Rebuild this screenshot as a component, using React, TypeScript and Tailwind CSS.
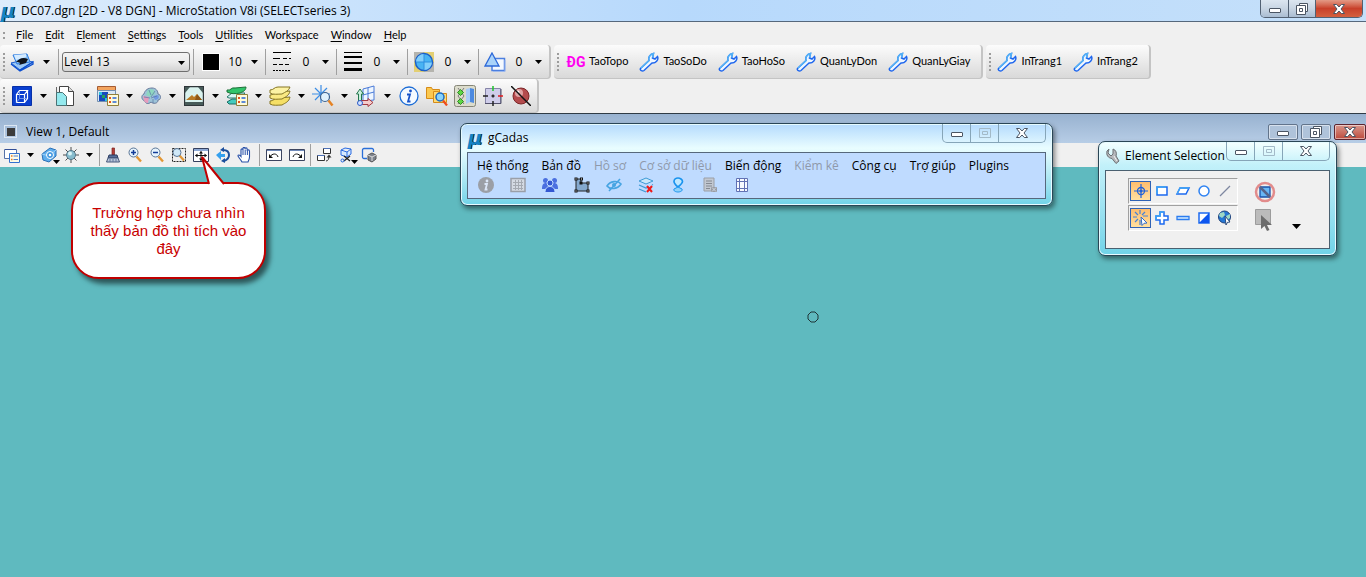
import type { ReactNode } from "react"
import { clsx } from "clsx"

type Glyph = () => ReactNode

interface SvgProps {
  size?: string
  box?: string
  children: ReactNode
}

function Svg({ size = "w-5 h-5", box = "0 0 20 20", children }: SvgProps) {
  return (
    <svg viewBox={box} fill="none" className={clsx("block shrink-0", size)} aria-hidden="true">
      {children}
    </svg>
  )
}

/* ---------- main toolbar icons ---------- */

const ActiveLevel: Glyph = () => (
  <Svg size="w-6 h-5" box="0 0 24 20">
    <path d="M1 11l13-3 9 2-13 8z" fill="#9cc8f5" stroke="#1c5fd0" />
    <path d="M3 3l14-1 3 8-13 2z" fill="#8ec4f7" stroke="#2b7ae0" />
    <path d="M4 3l12-1v3L6 8z" fill="#d5ebff" />
    <path d="M6 10c4-4 7-5 12-3l-2 4-7 2c2-2 1-3-3-3z" fill="#10141c" />
    <path d="M10 18l13-8v2l-13 7-9-7" stroke="#0b4fd0" strokeWidth="1.3" />
  </Svg>
)

const LineStyle: Glyph = () => (
  <Svg>
    <path d="M1 .5h18" stroke="#000" />
    <path d="M1 6.500h18" stroke="#000" strokeDasharray="7 3 4 2" />
    <path d="M1 12.500h18" stroke="#000" strokeDasharray="4 2" />
    <path d="M1 18.500h18" stroke="#000" strokeDasharray="2 1" />
  </Svg>
)

const LineWeight: Glyph = () => (
  <Svg>
    <path d="M1 .5h18" stroke="#000" />
    <path d="M1 5h18" stroke="#000" strokeWidth="2" />
    <path d="M1 11h18" stroke="#000" strokeWidth="2" />
    <path d="M1 17.500h18" stroke="#000" strokeWidth="3" />
  </Svg>
)

const Transparency: Glyph = () => (
  <Svg>
    <path d="M0 0h20v20H0z" fill="#b5b4ae" />
    <path d="M10 0h10v10H10zM0 10h10v10H0z" fill="#e3cf73" />
    <circle cx="10" cy="10" r="8.500" fill="#49b4f3" stroke="#1c5fc8" strokeWidth="1.500" />
    <path d="M10 2a8 8 0 0 0-8 8h8zM10 18a8 8 0 0 0 8-8h-8z" fill="#83d0fb" />
    <path d="M10 2v16M2 10h16" stroke="#2f8fe0" />
  </Svg>
)

const Priority: Glyph = () => (
  <Svg size="w-[22px] h-5" box="0 0 22 20">
    <path d="M8 6.500h12.500v12H8z" fill="#f4f9ff" stroke="#4c7fe0" strokeWidth="1.500" />
    <path d="M21 8v11.500H9" stroke="#9db9ee" />
    <path d="M8 1l7 13H1z" fill="#a9d3fa" stroke="#2c68d8" strokeWidth="1.300" />
  </Svg>
)

const Wrench: Glyph = () => (
  <Svg>
    <path
      d="M1.500 16.500l8.500-8c-1-3 1-6.500 4.500-7l-1 4.500 2.500 1 2.500-2.500c1.500 3.500-2 7-5.500 6.500L5 18.500c-1.500 1-4.500 0-3.500-2z"
      fill="#eef7ff"
      stroke="#1e66ee"
      strokeWidth="1.500"
    />
    <path d="M2 16l8-7.500c-1-3 1-6.500 4.500-7l-1 4" stroke="#54b4f6" strokeWidth="1.500" />
  </Svg>
)

const Models: Glyph = () => (
  <Svg>
    <path d="M.5.500h19v19H.5z" fill="#0a3fd0" stroke="#0730a8" />
    <path d="M4.500 8.500h8v8h-8zM4.500 8.500l3-4h8l-3 4M15.500 4.500v8l-3 4" stroke="#fff" strokeWidth="1.200" />
    <path d="M7.500 5v7.500H15M7.500 12.500l-3 4" stroke="#86a6f0" strokeWidth=".8" />
  </Svg>
)

const References: Glyph = () => (
  <Svg>
    <path d="M1.500 1v17" stroke="#666" />
    <path d="M4.500.5h9l5 5v14h-14z" fill="#fff" stroke="#444" />
    <path d="M13.500.5v5h5" fill="#ddd" stroke="#444" />
    <path d="M1.500 6.500h6l4 4v9h-10z" fill="#94e9ee" stroke="#4a7275" />
  </Svg>
)

const Raster: Glyph = () => (
  <Svg size="w-[22px] h-5" box="0 0 22 20">
    <path d="M.5.500h18v4H.5z" fill="#f3a45e" stroke="#a45b32" />
    <path d="M.5 4.500h18v11H.5z" fill="#d9e7f5" stroke="#7390b0" />
    <path d="M2 6h9v9H2z" fill="#174bbd" />
    <path d="M2 6h3v3H2zM8 12h3v3H8z" fill="#29c3e0" />
    <path d="M5 9h3v3H5z" fill="#23a358" />
    <path d="M10.500 8.500h11v11h-11z" fill="#fffbd8" stroke="#907f3d" />
    <path d="M12 11h2v2h-2zM12 15h2v2h-2z" fill="#e55320" />
    <path d="M15.500 12h4M15.500 16h4" stroke="#2864d8" strokeWidth="1.500" />
  </Svg>
)

const PointCloud: Glyph = () => (
  <Svg>
    <path d="M3 8c1-4 4-6 8-6s6 3 6 6c4 1 3 6 0 6 0 4-5 4-7 2-3 3-6 1-6-1-4-1-4-6-1-7z" fill="#9dc3d8" stroke="#687a9c" />
    <path d="M7 4c4-2 7 0 7 4l-5 3-4-2z" fill="#8ed7c0" />
    <path d="M2 10l6 1-1 6c-2 0-4-1-4-3z" fill="#e79abb" />
    <path d="M12 10l5-1c2 2 0 5-3 5z" fill="#7099e2" />
    <path d="M8 4l2 5M14 5l-4 6M3 11l6 1M16 10l-6 2M12 13v4" stroke="#5a76a5" strokeWidth=".7" />
  </Svg>
)

const SavedViews: Glyph = () => (
  <Svg>
    <path d="M.5.500h19v19H.5z" fill="#d9f2ee" stroke="#30363a" strokeWidth="1.400" />
    <path d="M1 1h5L1 7zM19 1v6l-5-6zM1 19v-3h18v3z" fill="#475b59" />
    <path d="M2 14l6-5 2 2 3-3 5 6z" fill="#b87a25" />
    <path d="M13 8l5 6h-7z" fill="#8d5716" />
  </Svg>
)

const LevelManager: Glyph = () => (
  <Svg size="w-[22px] h-5" box="0 0 22 20">
    <path d="M1 16l5-3h12l-5 5H3z" fill="#45cbbf" stroke="#1d6d63" />
    <path d="M1 11l5-4h13l-5 5H3z" fill="#d8f7f6" stroke="#267b6c" />
    <path d="M1 4c4 1 4-3 8-2l11-1c0 4-4 5-6 6-5 1-9 1-13-1z" fill="#31c46a" stroke="#1d7038" />
    <path d="M10.500 8.500h11v11h-11z" fill="#fffbd8" stroke="#907f3d" />
    <path d="M12 11h2v2h-2zM12 15h2v2h-2z" fill="#e55320" />
    <path d="M15.500 12h4M15.500 16h4" stroke="#2864d8" strokeWidth="1.500" />
  </Svg>
)

const LevelDisplay: Glyph = () => (
  <Svg size="w-[22px] h-5" box="0 0 22 20">
    <path d="M1 15c4 0 4-3 8-3l12-1c-1 5-5 6-8 8-4 0-9 1-12-1z" fill="#f5df66" stroke="#857524" />
    <path d="M1 9c4 0 4-3 8-3l12-1c-1 5-5 6-8 8-4 0-9 1-12-1z" fill="#fae983" stroke="#857524" />
    <path d="M1 4c4 0 4-3 8-3h12c-1 4-5 5-8 7-4 0-9 1-12-1z" fill="#fcf2a4" stroke="#857524" />
  </Svg>
)

const AccuDraw: Glyph = () => (
  <Svg size="w-[22px] h-[22px]" box="0 0 22 22">
    <path d="M9 0v18M0 9h18M3 3l12 12M15 3L3 15" stroke="#3b8de6" strokeWidth="1.200" />
    <circle cx="13" cy="12" r="4.500" fill="#dff1fd" stroke="#3b5f8c" strokeWidth="1.200" />
    <path d="M16.500 15.500l4 5" stroke="#e58325" strokeWidth="2.500" />
  </Svg>
)

const AuxCoords: Glyph = () => (
  <Svg size="w-[22px] h-[22px]" box="0 0 22 22">
    <path d="M8 4l11-3v14L8 16zM8 10l11-3M13 3v12" fill="#eef6ff" stroke="#4a7bd8" />
    <path d="M3.500 17V9H1.500L5 4l3.500 5H6.500v7z" fill="#c9efdb" stroke="#23764d" />
    <path d="M6 15.500h7v-2l5 4-5 4v-2H6z" fill="#f5cccc" stroke="#a33a42" />
    <circle cx="5" cy="18" r="2.500" fill="#cfe0ff" stroke="#2b59c8" />
  </Svg>
)

const Info: Glyph = () => (
  <Svg>
    <circle cx="10" cy="10" r="9" fill="#f5faff" stroke="#1d6dd6" strokeWidth="1.300" />
    <circle cx="11.500" cy="5" r="1.400" fill="#1652c8" />
    <path d="M8 8.500h3l-2 7h2.500" stroke="#1652c8" strokeWidth="1.800" />
  </Svg>
)

const Explore: Glyph = () => (
  <Svg size="w-[22px] h-5" box="0 0 22 20">
    <path d="M.5 1.500h5l1 2h7v9H.5z" fill="#fbc84f" stroke="#d68b18" />
    <path d="M7.500 5.500h5l1 2h7v9h-13z" fill="#fddb74" stroke="#d68b18" />
    <circle cx="14" cy="11" r="4" fill="#89d3fb" stroke="#1b6bc4" strokeWidth="1.500" />
    <path d="M17 14.500l4 5" stroke="#ee4b1c" strokeWidth="2.200" />
  </Svg>
)

const KeyinBrowser: Glyph = () => (
  <Svg size="w-[22px] h-[22px]" box="0 0 22 22">
    <rect x=".5" y=".5" width="21" height="21" rx="2" fill="#dcdccc" stroke="#858577" />
    <path d="M4 3l6 8-6 8M10 3l-6 8 6 8" stroke="#666" strokeWidth=".8" />
    <path d="M6.500 4.500l3 3-3 3-3-3zM6.500 13.500l3 3-3 3-3-3z" fill="#5fd746" stroke="#2d8924" />
    <path d="M12 4l4-1v14l-4 2z" fill="#a9cdf8" />
    <path d="M16 3l4 1v14l-4-1z" fill="#4d8ae0" />
  </Svg>
)

const AccuSnap: Glyph = () => (
  <Svg>
    <path d="M2.500 2.500h15v15h-15z" fill="#cfcdea" stroke="#8685a8" />
    <path d="M2 17.500h16V3" stroke="#51506a" />
    <path d="M10 0v5" stroke="#1fc32a" strokeWidth="1.500" />
    <path d="M15 10h5" stroke="#e21b1b" strokeWidth="1.500" />
    <path d="M0 10h5M10 15v5M8.500 10h3M10 8.500v3" stroke="#222" strokeWidth="1.500" />
  </Svg>
)

const NoRender: Glyph = () => (
  <Svg>
    <circle cx="10" cy="10" r="8" fill="#b44b4d" stroke="#7c2628" />
    <circle cx="8" cy="7" r="4" fill="#e0a3a3" />
    <circle cx="7" cy="6" r="1.500" fill="#fff" />
    <path d="M0 0l20 20" stroke="#111" strokeWidth="1.500" />
  </Svg>
)

/* ---------- view toolbar icons ---------- */

const S = "w-4 h-4"
const B = "0 0 16 16"

const ViewAttributes: Glyph = () => (
  <Svg size={S} box={B}>
    <path d="M.5 2.500h12v9H.5z" fill="#fff" stroke="#5672a8" />
    <path d="M1 2.500h11" stroke="#334f96" />
    <path d="M5.500 6.500h10v9h-10z" fill="#fdfbe8" stroke="#3471cf" />
    <path d="M7 9h1.500M7 12.500h1.500" stroke="#e57a20" strokeWidth="1.500" />
    <path d="M9.500 9h4.500M9.500 12.500h4.500" stroke="#4d7fd0" />
  </Svg>
)

const DisplayStyle: Glyph = () => (
  <Svg size={S} box={B}>
    <path d="M1 7l8-6 6 2v6l-7 6-6-2z" fill="#5eaeee" stroke="#2a70b6" />
    <path d="M1 7l7 2 7-6" stroke="#9fd2f8" />
    <circle cx="9" cy="8" r="3.500" fill="#3f97e0" stroke="#fff" />
    <circle cx="9" cy="8" r="1.300" fill="#fff" />
  </Svg>
)

const Brightness: Glyph = () => (
  <Svg size={S} box={B}>
    <path d="M8 0v16M0 8h16M2.500 2.500l11 11M13.500 2.500l-11 11" stroke="#4d4d4d" />
    <circle cx="8" cy="8" r="4.500" fill="#87bccd" stroke="#56798b" />
    <circle cx="7" cy="6.500" r="2" fill="#d9f3f6" />
  </Svg>
)

const Brush: Glyph = () => (
  <Svg size={S} box={B}>
    <path d="M7 1h2.500v7H7z" fill="#b43c36" stroke="#7b2420" strokeWidth=".7" />
    <path d="M4 8h8l1 3H3z" fill="#576f99" stroke="#2c3d61" />
    <path d="M3 11h10l1.500 4h-13z" fill="#b8c6da" stroke="#45577a" />
    <path d="M5 12v3M8 12v3M11 12v3" stroke="#62779c" />
  </Svg>
)

function Lens({ children }: { children?: ReactNode }) {
  return (
    <Svg size={S} box={B}>
      <path d="M9.500 9.500l4.500 5" stroke="#e29735" strokeWidth="2.400" />
      <circle cx="6.500" cy="5.500" r="4.500" fill="#e5f3fd" stroke="#5a7696" />
      {children}
    </Svg>
  )
}

const ZoomIn: Glyph = () => (
  <Lens>
    <path d="M4 5.500h5M6.500 3v5" stroke="#123c98" strokeWidth="1.500" />
  </Lens>
)

const ZoomOut: Glyph = () => (
  <Lens>
    <path d="M4 5.500h5" stroke="#123c98" strokeWidth="1.500" />
  </Lens>
)

const WindowArea: Glyph = () => (
  <Svg size={S} box={B}>
    <path d="M1.500 1.500h13v13h-13z" stroke="#222" strokeDasharray="2 1" />
    <path d="M8.500 8.500l4.500 5" stroke="#e29735" strokeWidth="2.200" />
    <circle cx="6" cy="5.500" r="4" fill="#cfe8f8" stroke="#5a7696" />
  </Svg>
)

const FitView: Glyph = () => (
  <Svg size={S} box={B}>
    <path d="M.5 1.500h15v13H.5z" fill="#fff" stroke="#35405e" />
    <path d="M1 2h14v2H1z" fill="#8da9d6" />
    <path d="M2.500 8.500h11M8 4.500v9" stroke="#111" />
    <path d="M2 8.500l2.500-2v4zM14 8.500l-2.500-2v4zM8 4l-2 2.500h4zM8 14l-2-2.500h4z" fill="#111" />
  </Svg>
)

const RotateView: Glyph = () => (
  <Svg size={S} box={B}>
    <path d="M1 8l5-4v3h4v3H6v3z" fill="#35a0ee" />
    <path d="M8 3c4 0 6 2 6 5s-2 5-5 6" stroke="#1c4f9c" strokeWidth="2" />
    <path d="M9 0v5L5 3zM10 11v5l-4-2z" fill="#1c4f9c" />
  </Svg>
)

const Pan: Glyph = () => (
  <Svg size={S} box={B}>
    <path
      d="M5 15c-1-2-3-4-4-6 0-1.500 1.500-1.500 3 .5V3c0-1.500 2-1.500 2 0V1.500c0-1.500 2-1.500 2 0V2c0-1.500 2.200-1.500 2.200.2V4c0-1.500 2.300-1.500 2.300.2V10c0 2-1 4-1.500 5z"
      fill="#fff"
      stroke="#2850a8"
      strokeWidth="1.100"
    />
    <path d="M6 3v5M8.200 2.500V8M10.400 4v4" stroke="#2850a8" />
  </Svg>
)

const ViewPrevious: Glyph = () => (
  <Svg size={S} box={B}>
    <path d="M.5 2.500h15v11H.5z" fill="#fff" stroke="#3c4560" />
    <path d="M1 3h14v1H1z" fill="#6e88b8" />
    <path d="M4 10c2-4 7-4 8 0" stroke="#111" />
    <path d="M3 7v4h4z" fill="#111" />
  </Svg>
)

const ViewNext: Glyph = () => (
  <Svg size={S} box={B}>
    <path d="M.5 2.500h15v11H.5z" fill="#fff" stroke="#3c4560" />
    <path d="M1 3h14v1H1z" fill="#6e88b8" />
    <path d="M4 10c1-4 6-4 8 0" stroke="#111" />
    <path d="M13 7v4H9z" fill="#111" />
  </Svg>
)

const CopyView: Glyph = () => (
  <Svg size={S} box={B}>
    <path d="M7.500 1.500h7v5h-7zM1.500 8.500h7v5h-7z" fill="#fff" stroke="#333" />
    <path d="M7.500 1.500h7M1.500 8.500h7" stroke="#4d71b8" />
    <path d="M10 14c2 0 3-2 3-5" stroke="#333" />
    <path d="M13 7.500l2.500 3h-5z" fill="#333" />
  </Svg>
)

const ClipVolume: Glyph = () => (
  <Svg size={S} box={B}>
    <path d="M2 3l4-2 6 1v5l-4 3-6-2zM2 3l6 2 4-3M8 5v5" fill="#d7eaff" stroke="#2a6ae0" />
    <path d="M5 9l6 5M11 9l-6 5" stroke="#222" strokeWidth="1.300" />
    <circle cx="3.500" cy="13.500" r="1.500" stroke="#1d62dd" />
  </Svg>
)

const ClipMask: Glyph = () => (
  <Svg size={S} box={B}>
    <path d="M6 11.500H3a1.500 1.500 0 0 1-1.500-1.500V3A1.500 1.500 0 0 1 3 1.500h8A1.500 1.500 0 0 1 12.500 3v2" stroke="#2b6fd8" strokeWidth="1.300" />
    <path d="M7 8l4-2 4 2v4l-4 3-4-2z" fill="#7c828c" stroke="#555" />
    <path d="M7 8l4 2 4-2M11 10v4" stroke="#ddd" />
  </Svg>
)

/* ---------- gCadas icons ---------- */

const CadInfo: Glyph = () => (
  <Svg size={S} box={B}>
    <circle cx="8" cy="8" r="8" fill="#9b9fa6" />
    <circle cx="9" cy="4" r="1.400" fill="#dce7f8" />
    <path d="M6.500 7h2.500l-1.500 5.500h2" stroke="#dce7f8" strokeWidth="1.800" />
  </Svg>
)

const CadGrid: Glyph = () => (
  <Svg size={S} box={B}>
    <path d="M1 1.500h14v13H1z" fill="#d4dae3" stroke="#9a9fa8" strokeWidth="1.500" />
    <path d="M3 5.500h10M3 8.500h10M3 11.500h10M5.500 3v10M8.500 3v10M11.500 3v10" stroke="#a5aab2" />
  </Svg>
)

const CadUsers: Glyph = () => (
  <Svg size={S} box={B}>
    <circle cx="3.500" cy="3.500" r="2.500" fill="#4a6fe0" />
    <circle cx="12.500" cy="3.500" r="2.500" fill="#4a6fe0" />
    <path d="M0 12c0-4 1-6 4-6h8c3 0 4 2 4 6z" fill="#4a6fe0" />
    <circle cx="8" cy="6" r="3" fill="#3458d2" stroke="#bfdbff" />
    <path d="M3 15.500c0-4 2-6 5-6s5 2 5 6z" fill="#3458d2" stroke="#bfdbff" />
  </Svg>
)

const CadParcel: Glyph = () => (
  <Svg size={S} box={B}>
    <path d="M2 2h5v4h7v8H2z" fill="#84a9cf" stroke="#222" />
    <path d="M.5.500h3v3h-3zM6 .5h3v3H6zM5.500 4.500h3v3h-3zM12.500 4.500h3v3h-3zM12.500 12.500h3v3h-3zM.5 12.500h3v3h-3z" fill="#111" />
    <path d="M1.500 1.500h1v1h-1zM7 1.500h1v1H7zM13.500 5.500h1v1h-1zM13.500 13.500h1v1h-1zM1.500 13.500h1v1h-1z" fill="#fff" />
  </Svg>
)

const CadHide: Glyph = () => (
  <Svg size={S} box={B}>
    <path d="M1 9c3-5 11-6 14-2-3 5-11 6-14 2z" stroke="#47a4e2" strokeWidth="1.600" />
    <circle cx="8" cy="8" r="2" fill="#47a4e2" />
    <path d="M3 14L14 2" stroke="#47a4e2" strokeWidth="1.600" />
  </Svg>
)

const CadLayers: Glyph = () => (
  <Svg size={S} box={B}>
    <path d="M1 4l7-3 7 3-7 3z" fill="#c9e8fb" stroke="#3f9bd6" />
    <path d="M1 8l7 3 3-1M1 12l7 3M15 7.500l-1 .5" stroke="#3f9bd6" strokeWidth="1.300" />
    <path d="M9 9l5 6M14 9l-5 6" stroke="#ef1a1a" strokeWidth="2" />
  </Svg>
)

const CadPin: Glyph = () => (
  <Svg size={S} box={B}>
    <path d="M8 10C5 7.500 4 6 4 4.500 4 2.500 6 1 8 1s4.500 1.500 4.500 3.500C12.500 6 11 7.500 8 10z" fill="#bfe7ff" stroke="#1a93ee" strokeWidth="1.700" />
    <path d="M8 10l4 2c1 2-2 3-4 3s-5-1-4-3z" fill="#8fd1fa" stroke="#1a93ee" />
  </Svg>
)

const CadDocument: Glyph = () => (
  <Svg size={S} box={B}>
    <path d="M2 1h10v13H2z" fill="#c2c8d1" stroke="#9b9fa6" />
    <path d="M4 4h6M4 6.500h6M4 9h6M4 11.500h4" stroke="#858a92" />
    <path d="M9 10h6v5H9z" fill="#999da4" />
    <path d="M10 10.500l4 4M14 10.500l-4 4" stroke="#cfd8e6" />
  </Svg>
)

const CadTable: Glyph = () => (
  <Svg size={S} box={B}>
    <path d="M2.500 1.500h11v13h-11z" fill="#f7faff" stroke="#6272b4" />
    <path d="M5.500 1v14M10.500 1v14M2 4.500h12M2 11.500h12" stroke="#6272b4" />
  </Svg>
)

/* ---------- element selection icons ---------- */

const SelIndividual: Glyph = () => (
  <Svg size={S} box={B}>
    <circle cx="8" cy="8" r="3.500" stroke="#1e62dc" strokeWidth="1.300" />
    <path d="M8 1v14M1 8h14" stroke="#1e62dc" strokeWidth="1.200" />
    <circle cx="8" cy="8" r="1.500" fill="#1e62dc" />
  </Svg>
)

const SelBlock: Glyph = () => (
  <Svg size={S} box={B}>
    <path d="M3 4h10v8H3z" fill="#fff" stroke="#1c6af0" strokeWidth="1.500" />
    <path d="M3 11V4h9" stroke="#3fa5f5" strokeWidth="1.500" />
  </Svg>
)

const SelShape: Glyph = () => (
  <Svg size={S} box={B}>
    <path d="M2 11l3-6h9l-3 6z" fill="#fff" stroke="#1c6af0" strokeWidth="1.500" />
    <path d="M2 11l3-6h9" stroke="#3fa5f5" strokeWidth="1.300" />
  </Svg>
)

const SelCircle: Glyph = () => (
  <Svg size={S} box={B}>
    <circle cx="8" cy="8" r="5" fill="#fff" stroke="#2f83f2" strokeWidth="1.500" />
  </Svg>
)

const SelLine: Glyph = () => (
  <Svg size={S} box={B}>
    <path d="M3 13L13 3" stroke="#7e87a0" strokeWidth="1.200" />
  </Svg>
)

const SelNew: Glyph = () => (
  <Svg size={S} box={B}>
    <path d="M7 0v4M0 7h4M2 2l3 3M12 2L9 5M2 12l3-3M7 10v5M10 6h5" stroke="#4683d7" strokeWidth="1.200" />
    <path d="M8 7l6 6-3 .3-2 2.200z" fill="#fff" stroke="#2f6bc9" />
  </Svg>
)

const SelAdd: Glyph = () => (
  <Svg size={S} box={B}>
    <path d="M6 2h4v4h4v4h-4v4H6v-4H2V6h4z" fill="#fff" stroke="#1c6af0" strokeWidth="1.500" />
    <path d="M2 10V6h4V2h4" stroke="#3fa5f5" strokeWidth="1.500" />
  </Svg>
)

const SelSubtract: Glyph = () => (
  <Svg size={S} box={B}>
    <path d="M2 6.500h12v3H2z" fill="#d6ecff" stroke="#2b7cf0" strokeWidth="1.300" />
  </Svg>
)

const SelInvert: Glyph = () => (
  <Svg size={S} box={B}>
    <path d="M3 3h10v10H3z" fill="#fff" stroke="#1c6af0" strokeWidth="1.500" />
    <path d="M13 3v10H3z" fill="#0d55ef" />
  </Svg>
)

const SelAll: Glyph = () => (
  <Svg size={S} box={B}>
    <circle cx="7.500" cy="7" r="6" fill="#2577d5" stroke="#1c3f78" />
    <path d="M3 3l4-1 1 3-3 3-3-2zM9 6l4-2v4l-3 2z" fill="#9ed8c4" />
    <path d="M8 6l5 6-2.500.3L9 15z" fill="#fff" stroke="#2c4c7b" />
  </Svg>
)

/* ---------- shared controls ---------- */

function Caret({ className }: { className?: string }) {
  return (
    <svg viewBox="0 0 7 4" className={clsx("block h-1 w-[7px] shrink-0", className)} aria-hidden="true">
      <path d="M0 0h7L3.500 4z" fill="#000" />
    </svg>
  )
}

function Grip() {
  return (
    <span className="grid shrink-0 gap-0.5 pl-[3px]" aria-hidden="true">
      {[0, 1, 2, 3, 4].map((i) => (
        <i key={i} className="block h-0.5 w-0.5 bg-[#9c9c9c]" />
      ))}
    </span>
  )
}

function Divider({ className = "h-[26px]" }: { className?: string }) {
  return <span className={clsx("w-px shrink-0 bg-[#a0a0a0]", className)} aria-hidden="true" />
}

function ToolButton({ label, icon: Icon, className }: { label: string; icon: Glyph; className: string }) {
  return (
    <button aria-label={label} className={clsx("flex shrink-0 items-center justify-center", className)}>
      <Icon />
    </button>
  )
}

function DropButton({ label }: { label: string }) {
  return (
    <button aria-label={label} className="flex h-6 w-[15px] shrink-0 items-center justify-center">
      <Caret />
    </button>
  )
}

function ToolGroup({ label, children }: { label: string; children: ReactNode }) {
  return (
    <div
      role="toolbar"
      aria-label={label}
      className="flex h-[34px] items-center rounded border-r-2 border-b border-[#c4c4c4] bg-linear-to-b from-[#fcfcfc] to-[#d9d9d9]"
    >
      {children}
    </div>
  )
}

function AttributePicker({ label, value, icon: Icon }: { label: string; value: string; icon: Glyph }) {
  return (
    <div className="flex w-[71px] items-center">
      <Divider />
      <ToolButton label={label} icon={Icon} className="w-8" />
      <span className="ml-0.5 w-3 text-center text-xs">{value}</span>
      <span className="ml-1.5">
        <DropButton label={label + " list"} />
      </span>
    </div>
  )
}

type Mark = "min" | "max" | "restore" | "close"

function WindowMark({ kind, faded }: { kind: Mark; faded?: boolean }) {
  const line = faded ? "#a3bac8" : "#4b5563"
  return (
    <svg viewBox="0 0 14 12" className="block h-3 w-3.5" aria-hidden="true" fill="none">
      {kind === "min" && <rect x="1.500" y="5.500" width="11" height="4" rx=".5" fill="#fff" stroke={line} />}
      {kind === "max" && <path d="M1.500 1.500h11v9h-11zM4.500 4.500h5v3h-5z" stroke={line} />}
      {kind === "restore" && (
        <>
          <path d="M4.500.5h8v8h-8z" fill="#fff" stroke={line} />
          <path d="M1.500 2.500h9v9h-9z" fill="#fff" stroke={line} />
          <path d="M4.500 5.500h3v3h-3z" stroke={line} />
        </>
      )}
      {kind === "close" && (
        <path
          d="M1.500 1.500h3.200L7 4l2.300-2.500h3.200L9 6l3.500 4.500H9.300L7 8l-2.300 2.500H1.500L5 6z"
          fill="#fff"
          stroke={line}
        />
      )}
    </svg>
  )
}

function WindowControls() {
  return (
    <div className="flex h-[19px] shrink-0 divide-x divide-[#86a5b8] rounded-b-[5px] border-x border-b border-[#86a5b8]">
      <button aria-label="Minimize" className="flex w-7 items-center justify-center"><WindowMark kind="min" /></button>
      <button aria-label="Maximize" disabled className="flex w-7 items-center justify-center"><WindowMark kind="max" faded /></button>
      <button aria-label="Close" className="flex w-[46px] items-center justify-center"><WindowMark kind="close" /></button>
    </div>
  )
}

function Logo() {
  return (
    <span
      aria-hidden="true"
      className="w-4 shrink-0 text-center font-['DejaVu_Sans',sans-serif] text-xl leading-4 font-bold text-[#1583c4] italic [text-shadow:1px_0_0_#10222e]"
    >
      μ
    </span>
  )
}

/* ---------- data ---------- */

const menus = [
  ["", "F", "ile"],
  ["", "E", "dit"],
  ["E", "l", "ement"],
  ["", "S", "ettings"],
  ["", "T", "ools"],
  ["", "U", "tilities"],
  ["Wor", "k", "space"],
  ["", "W", "indow"],
  ["", "H", "elp"],
]

const primaryTools = [
  { label: "Models", icon: Models },
  { label: "References", icon: References },
  { label: "Raster Manager", icon: Raster },
  { label: "Point Clouds", icon: PointCloud },
  { label: "Saved Views", icon: SavedViews },
  { label: "Level Manager", icon: LevelManager },
  { label: "Level Display", icon: LevelDisplay },
  { label: "AccuDraw", icon: AccuDraw },
  { label: "Auxiliary Coordinates", icon: AuxCoords },
]

const extraTools = [
  { label: "Element Information", icon: Info },
  { label: "Project Explorer", icon: Explore },
  { label: "Key-in Browser", icon: KeyinBrowser },
  { label: "Toggle AccuSnap", icon: AccuSnap },
  { label: "Popup Calculator", icon: NoRender },
]

const zoomTools = [
  { label: "Update View", icon: Brush },
  { label: "Zoom In", icon: ZoomIn },
  { label: "Zoom Out", icon: ZoomOut },
  { label: "Window Area", icon: WindowArea },
  { label: "Fit View", icon: FitView },
  { label: "Rotate View", icon: RotateView },
  { label: "Pan View", icon: Pan },
]

const cadMenus = [
  { label: "Hệ thống" },
  { label: "Bản đồ" },
  { label: "Hồ sơ", disabled: true },
  { label: "Cơ sở dữ liệu", disabled: true },
  { label: "Biến động" },
  { label: "Kiểm kê", disabled: true },
  { label: "Công cụ" },
  { label: "Trợ giúp" },
  { label: "Plugins" },
]

const cadTools = [
  { label: "Thông tin", icon: CadInfo },
  { label: "Bảng", icon: CadGrid },
  { label: "Người dùng", icon: CadUsers },
  { label: "Thửa đất", icon: CadParcel },
  { label: "Ẩn", icon: CadHide },
  { label: "Xóa lớp", icon: CadLayers },
  { label: "Vị trí", icon: CadPin },
  { label: "Hồ sơ", icon: CadDocument },
  { label: "Lưới", icon: CadTable },
]

const methods = [
  { label: "Individual", icon: SelIndividual },
  { label: "Block", icon: SelBlock },
  { label: "Shape", icon: SelShape },
  { label: "Circle", icon: SelCircle },
  { label: "Line", icon: SelLine },
]

const modes = [
  { label: "New", icon: SelNew },
  { label: "Add", icon: SelAdd },
  { label: "Subtract", icon: SelSubtract },
  { label: "Invert", icon: SelInvert },
  { label: "Select All", icon: SelAll },
]

/* ---------- sections ---------- */

function TitleBar() {
  return (
    <header className="flex h-[22px] items-start border-b border-[#56687c] bg-linear-to-r from-[#dcecfc] via-[#b7d9fc] to-[#c5e0fa] pr-[3px]">
      <div className="flex h-[21px] flex-1 items-center gap-[5px]">
        <Logo />
        <h1 className="text-xs">DC07.dgn [2D - V8 DGN] - MicroStation V8i (SELECTseries 3)</h1>
      </div>
      <div className="flex h-[18px] divide-x divide-[#526173] overflow-hidden rounded-b-[5px] border-x border-b border-[#526173]">
        <button aria-label="Minimize" className="flex w-7 items-center justify-center bg-linear-to-b from-[#dce6f0] via-[#c8d5e3] via-50% to-[#aabdd2]"><WindowMark kind="min" /></button>
        <button aria-label="Restore" className="flex w-[27px] items-center justify-center bg-linear-to-b from-[#dce6f0] via-[#c8d5e3] via-50% to-[#aabdd2]"><WindowMark kind="restore" /></button>
        <button aria-label="Close" className="flex w-[46px] items-center justify-center bg-linear-to-b from-[#e39a86] via-[#c8402a] via-50% to-[#d4603f]"><WindowMark kind="close" /></button>
      </div>
    </header>
  )
}

function MenuBar() {
  return (
    <nav className="flex h-[23px] items-center pt-[3px] pl-[3px]">
      <span className="mr-[5px] grid gap-[3px]" aria-hidden="true">
        <i className="block h-0.5 w-0.5 bg-[#9c9c9c]" />
        <i className="block h-0.5 w-0.5 bg-[#9c9c9c]" />
      </span>
      {menus.map(([before, key, after]) => (
        <button key={before + key + after} className="px-1.5 font-['Lato',sans-serif] text-[11px]">
          {before}
          <u className="underline-offset-2">{key}</u>
          {after}
        </button>
      ))}
    </nav>
  )
}

function MacroButton({ label, children }: { label: string; children?: ReactNode }) {
  return (
    <button className="flex items-center gap-1 pr-[11px] font-['Lato',sans-serif] text-[11px]">
      {children ?? <Wrench />}
      {label}
    </button>
  )
}

function Toolbars() {
  return (
    <div>
      <div className="flex gap-[3px]">
        <ToolGroup label="Attributes">
          <Grip />
          <ToolButton label="Active level symbology" icon={ActiveLevel} className="ml-1 w-[26px]" />
          <span className="mx-1">
            <DropButton label="Symbology list" />
          </span>
          <Divider />
          <div className="relative mx-[3px] flex w-32">
            <select
              aria-label="Active level"
              className="h-5 w-full appearance-none rounded-[3px] border border-[#6f6f6f] bg-linear-to-b from-[#f3f3f3] via-[#ebebeb] via-50% to-[#d3d3d3] pl-px text-xs leading-4"
            >
              <option>Level 13</option>
            </select>
            <Caret className="pointer-events-none absolute top-[9px] right-[5px]" />
          </div>
          <Divider />
          <button aria-label="Active color" className="ml-2 flex h-[18px] w-[18px] items-center justify-center border border-white bg-black" />
          <span className="ml-2 w-[14px] text-center text-xs">10</span>
          <span className="mr-[3px] ml-[5px]">
            <DropButton label="Color list" />
          </span>
          <AttributePicker label="Line style" value="0" icon={LineStyle} />
          <AttributePicker label="Line weight" value="0" icon={LineWeight} />
          <AttributePicker label="Transparency" value="0" icon={Transparency} />
          <AttributePicker label="Priority" value="0" icon={Priority} />
        </ToolGroup>
        <ToolGroup label="gCadas macros">
          <Grip />
          <span className="w-2" />
          <MacroButton label="TaoTopo">
            <span className="flex w-[18px] justify-center font-['Roboto',sans-serif] text-sm leading-5 font-bold text-[#ff00f0]" aria-hidden="true">
              ĐG
            </span>
          </MacroButton>
          <MacroButton label="TaoSoDo" />
          <MacroButton label="TaoHoSo" />
          <MacroButton label="QuanLyDon" />
          <MacroButton label="QuanLyGiay" />
        </ToolGroup>
        <ToolGroup label="Print macros">
          <Grip />
          <span className="w-1.5" />
          <MacroButton label="InTrang1" />
          <MacroButton label="InTrang2" />
        </ToolGroup>
      </div>
      <div className="flex">
        <ToolGroup label="Primary tools">
          <Grip />
          <span className="w-[3px]" />
          {primaryTools.map((tool) => (
            <div key={tool.label} className="flex w-[43px] items-center">
              <ToolButton {...tool} className="w-7" />
              <DropButton label={tool.label + " list"} />
            </div>
          ))}
          {extraTools.map((tool) => (
            <ToolButton key={tool.label} {...tool} className="w-7" />
          ))}
          <span className="w-0.5" />
        </ToolGroup>
      </div>
    </div>
  )
}

const viewButton = "flex h-4 items-center justify-center rounded-xs border shadow-[inset_0_0_0_1px_#ffffff80]"

function ViewHeader() {
  return (
    <>
      <div className="flex h-[29px] items-center bg-linear-to-b from-[#98b2d0] to-[#b7cde6] pt-1.5 pl-1">
        <span className="flex h-[13px] w-[13px] items-center justify-center border border-[#dce7f3]" aria-hidden="true">
          <i className="block h-2 w-2 bg-[#3c3c3c]" />
        </span>
        <h2 className="ml-[9px] flex-1 text-xs">View 1, Default</h2>
        <div className="flex gap-[3px]">
          <button aria-label="Minimize view" className={clsx(viewButton, "w-[30px] border-[#62748b] bg-[#afc3da]")}><WindowMark kind="min" /></button>
          <button aria-label="Restore view" className={clsx(viewButton, "w-[30px] border-[#62748b] bg-[#afc3da]")}><WindowMark kind="restore" /></button>
          <button aria-label="Close view" className={clsx(viewButton, "w-8 border-[#5c2430] bg-linear-to-b from-[#d8968c] to-[#bd4a3c]")}><WindowMark kind="close" /></button>
        </div>
      </div>
      <div role="toolbar" aria-label="View tools" className="flex h-6 items-center bg-[#f0f0f0] pl-px">
        <ToolButton label="View Attributes" icon={ViewAttributes} className="w-[22px]" />
        <DropButton label="Attributes list" />
        <div className="relative">
          <ToolButton label="Display Style" icon={DisplayStyle} className="w-[22px]" />
          <Caret className="absolute top-[13px] right-0" />
        </div>
        <ToolButton label="Adjust Brightness" icon={Brightness} className="w-[22px]" />
        <DropButton label="Brightness list" />
        <Divider className="mx-0.5 h-[22px]" />
        {zoomTools.map((tool) => (
          <ToolButton key={tool.label} {...tool} className="w-[22px]" />
        ))}
        <Divider className="mr-0.5 ml-[3px] h-[22px]" />
        <ToolButton label="View Previous" icon={ViewPrevious} className="w-[23px]" />
        <ToolButton label="View Next" icon={ViewNext} className="w-[23px]" />
        <Divider className="mr-px ml-0.5 h-[22px]" />
        <ToolButton label="Copy View" icon={CopyView} className="w-[23px]" />
        <div className="relative">
          <ToolButton label="Clip Volume" icon={ClipVolume} className="w-[23px]" />
          <Caret className="absolute top-[13px] right-0" />
        </div>
        <ToolButton label="Clip Mask" icon={ClipMask} className="w-[22px]" />
      </div>
    </>
  )
}

const glass =
  "absolute flex flex-col rounded-[7px] border border-[#2a4656] px-1.5 pb-1.5 shadow-[inset_0_0_0_1px_#e6fbff,2px_3px_5px_#0007]"

function CadasWindow() {
  return (
    <section className={clsx(glass, "top-[123px] left-[460px] w-[593px] bg-linear-to-b from-[#b4dafd] via-[#e9fdff] via-30% to-[#70d3e8]")}>
      <div className="flex h-7 items-start">
        <div className="flex h-7 flex-1 items-center gap-[5px]">
          <Logo />
          <h2 className="text-xs">gCadas</h2>
        </div>
        <WindowControls />
      </div>
      <div className="h-[47px] border border-[#56687c] bg-[#bfdbff] pt-1">
        <div className="flex h-[18px] items-center gap-[13px] pl-[9px]">
          {cadMenus.map((menu) => (
            <button
              key={menu.label}
              disabled={menu.disabled}
              className={clsx("text-xs whitespace-nowrap", menu.disabled && "text-[#8f99aa]")}
            >
              {menu.label}
            </button>
          ))}
        </div>
        <div className="flex items-center pt-0.5 pl-0.5">
          {cadTools.map((tool) => (
            <ToolButton key={tool.label} {...tool} className="w-8" />
          ))}
        </div>
      </div>
    </section>
  )
}

function ToolStrip({ items }: { items: { label: string; icon: Glyph }[] }) {
  return (
    <div className="flex h-[26px] w-[110px] items-center border border-t-[#a0a0a0] border-r-white border-b-white border-l-[#a0a0a0] pl-px">
      {items.map(({ label, icon: Icon }, i) => (
        <button
          key={label}
          aria-label={label}
          aria-pressed={i === 0}
          className={clsx(
            "flex h-5 w-[21px] items-center justify-center",
            i === 0 && "border border-[#2f62b5] bg-linear-to-b from-[#ffbd6d] to-[#ffe0a0]",
          )}
        >
          <Icon />
        </button>
      ))}
    </div>
  )
}

function ElementSelectionWindow() {
  return (
    <section className={clsx(glass, "top-[141px] left-[1098px] w-[239px] bg-linear-to-b from-[#f4ffff] via-[#c3f1fa] via-20% to-[#70d3e8]")}>
      <div className="flex h-7 items-start">
        <div className="flex h-7 flex-1 items-center gap-1">
          <Svg size="w-4 h-4" box="0 0 16 16">
            <path d="M4 1L3 5l3 3 2-2V1c3 1 4 4 3 7l3 5-3 2.500-4-5C3 10 1 7 2 3z" fill="#b6b9bd" stroke="#6d7175" />
            <path d="M9 8l3 5" stroke="#f0f0f0" />
          </Svg>
          <h2 className="text-xs whitespace-nowrap">Element Selection</h2>
        </div>
        <WindowControls />
      </div>
      <div className="flex h-[79px] border border-[#4a6070] bg-[#f0f0f0] pt-[7px] pl-[22px]">
        <div className="grid content-start gap-px">
          <ToolStrip items={methods} />
          <ToolStrip items={modes} />
        </div>
        <div className="ml-4 grid content-start gap-1.5 pt-[3px]">
          <button aria-label="Disable handles">
            <Svg size="w-[22px] h-[22px]" box="0 0 22 22">
              <path d="M6 6h10v10H6z" fill="#69b7f5" stroke="#1b51a8" strokeWidth="1.300" />
              <path d="M6 6l10 10" stroke="#58648a" strokeWidth="2.500" />
              <circle cx="11" cy="11" r="9" stroke="#e28b8b" strokeWidth="2.500" />
            </Svg>
          </button>
          <button aria-label="Select handles">
            <Svg size="w-[22px] h-[22px]" box="0 0 22 22">
              <path d="M1.500.5h15v15h-15z" fill="#bbb" stroke="#9c9c9c" />
              <path d="M7 6v14l3.500-3 2.500 5 2.500-1-2.500-5H18z" fill="#6d6d6d" />
            </Svg>
          </button>
        </div>
        <button aria-label="Show attributes" className="mb-3.5 ml-3 flex h-4 w-4 items-center justify-center self-end">
          <svg viewBox="0 0 9 5" className="block h-[5px] w-[9px]" aria-hidden="true">
            <path d="M0 0h9L4.500 5z" fill="#000" />
          </svg>
        </button>
      </div>
    </section>
  )
}

function Callout() {
  return (
    <div className="absolute top-[182px] left-[71px] w-[195px] rounded-[28px] border-2 border-[#c00000] bg-white px-3.5 pt-5 pb-[19px] shadow-[4px_5px_5px_#0008]">
      <svg viewBox="0 0 26 30" className="absolute -top-[29px] left-[128px] h-[30px] w-[26px]" fill="none" aria-hidden="true">
        <path d="M8 29L1 2l22 27v1H8z" fill="#fff" />
        <path d="M8 29L1 2l22 27" stroke="#c00000" strokeWidth="2" />
      </svg>
      <p className="text-center font-['Liberation_Sans',sans-serif] text-[15px] leading-[18px] text-[#c80000]">
        Trường hợp chưa nhìn thấy bản đồ thì tích vào đây
      </p>
    </div>
  )
}

export default function App() {
  return (
    <div className="relative flex min-h-screen flex-col bg-[#f0f0f0] font-['Open_Sans','Noto_Sans',sans-serif] text-black">
      <TitleBar />
      <MenuBar />
      <Toolbars />
      <main className="flex flex-1 flex-col border-t border-[#2f3b45]">
        <ViewHeader />
        <div className="flex-1 bg-[#5fbabf]" />
      </main>
      <svg viewBox="0 0 12 12" className="absolute top-[311px] left-[807px] h-3 w-3" fill="none" aria-hidden="true">
        <path d="M4 1h4l3 3v4l-3 3H4L1 8V4z" stroke="#1f3437" />
      </svg>
      <CadasWindow />
      <ElementSelectionWindow />
      <Callout />
    </div>
  )
}
